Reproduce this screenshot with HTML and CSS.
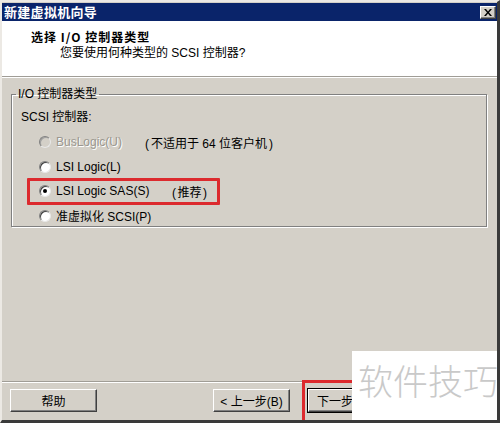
FILE: index.html
```html
<!DOCTYPE html>
<html lang="zh">
<head>
<meta charset="utf-8">
<link rel="stylesheet" href="styles.css">
</head>
<body>
<div class="window">
  <div class="titlebar">
    <span class="title">新建虚拟机向导</span>
    <span class="close"><svg width="8" height="7" viewBox="0 0 8 7"><path d="M0 0h2l2 2.5L6 0h2L5 3.5 8 7H6L4 4.5 2 7H0l3-3.5z" fill="#000"/></svg></span>
  </div>
  <div class="header">
    <div class="h-title">选择 I/O 控制器类型</div>
    <div class="h-sub">您要使用何种类型的 SCSI 控制器?</div>
  </div>
  <div class="sep"></div>
  <div class="body">
    <fieldset class="group">
      <legend>I/O 控制器类型</legend>
      <div class="label">SCSI 控制器:</div>
      <div class="row disabled"><span class="radio"></span><span class="rtext">BusLogic(U)</span><span class="note"><span class="p">(</span>不适用于 64 位客户机<span class="p">)</span></span></div>
      <div class="row"><span class="radio"></span><span class="rtext">LSI Logic(L)</span></div>
      <div class="row marked"><span class="radio checked"></span><span class="rtext">LSI Logic SAS(S)</span><span class="note rec"><span class="p">(</span>推荐<span class="p">)</span></span></div>
      <div class="row"><span class="radio"></span><span class="rtext">准虚拟化 SCSI(P)</span></div>
    </fieldset>
  </div>
  <div class="footer">
    <button class="btn help">帮助</button>
    <div class="nav">
      <button class="btn">&lt; 上一步(B)</button>
      <button class="btn next">下一步</button>
    </div>
  </div>
  <div class="watermark">软件技巧</div>
</div>
</body>
</html>
```
FILE: styles.css
```css
html, body {
  margin: 0;
  padding: 0;
  background: #fff;
}
.window {
  position: relative;
  width: 500px;
  height: 423px;
  box-sizing: border-box;
  border-style: solid;
  border-width: 2px 3px 3px 2px;
  border-color: #ece9e4 #3a3a3a #3a3a3a #ece9e4;
  padding-top: 1px;
  background: #d4d0c8;
  display: flex;
  flex-direction: column;
  font-family: "Liberation Sans", "Noto Sans CJK SC", sans-serif;
  font-size: 12px;
  color: #000;
  overflow: hidden;
}
.titlebar {
  height: 18px;
  background: #0a246a;
  display: flex;
  align-items: center;
  justify-content: space-between;
  padding: 0 1px 0 2px;
  flex: none;
}
.title {
  color: #fff;
  font-family: "Noto Sans CJK SC", sans-serif;
  font-weight: bold;
  font-size: 13px;
  line-height: 18px;
  letter-spacing: 0.3px;
}
.close {
  width: 14px;
  height: 11px;
  background: #d4d0c8;
  border-style: solid;
  border-width: 1px;
  border-color: #fff #404040 #404040 #fff;
  box-shadow: inset -1px -1px 0 #808080;
  display: flex;
  align-items: center;
  justify-content: center;
  margin-top: 1px;
}
.header {
  height: 55px;
  background: #fff;
  flex: none;
  box-sizing: border-box;
  padding: 7px 0 0 29px;
}
.h-title {
  font-family: "Noto Sans CJK SC", sans-serif;
  font-weight: bold;
  font-size: 12px;
  line-height: 18px;
  letter-spacing: 1px;
}
.h-sub {
  margin: -2px 0 0 29px;
  line-height: 18px;
  color: #000;
}
.sep {
  height: 0;
  border-top: 1px solid #a09d96;
  border-bottom: 1px solid #fff;
  flex: none;
}
.body {
  flex: 1;
  padding: 9px 10px 0 9px;
}
.group {
  margin: 0;
  padding: 2px 8px 8px 8px;
  border: 1px solid #808080;
  box-shadow: 1px 1px 0 #fff, inset 1px 1px 0 #fff;
  height: 140px;
  box-sizing: border-box;
}
.group legend {
  padding: 0 2px;
  margin-left: -4px;
  line-height: 14px;
}
.label {
  line-height: 18px;
  margin: 5px 0 4px 1px;
}
.row {
  position: relative;
  display: flex;
  align-items: center;
  height: 24.5px;
  padding-left: 19px;
}
.radio {
  width: 12px;
  height: 12px;
  box-sizing: border-box;
  border-radius: 50%;
  background: #fff;
  border: 1px solid;
  border-color: #808080 #e8e8e8 #e8e8e8 #808080;
  box-shadow: inset 1px 1px 0 #404040;
  display: flex;
  align-items: center;
  justify-content: center;
  margin-right: 5px;
  flex: none;
}
.radio.checked::after {
  content: "";
  width: 4px;
  height: 4px;
  border-radius: 50%;
  background: #000;
}
.disabled .radio {
  background: #d4d0c8;
  box-shadow: inset 1px 1px 0 #a0a0a0;
}
.disabled .rtext {
  color: #9a978f;
  text-shadow: 1px 1px 0 #fff;
}
.note {
  margin-left: 21px;
}
.note.rec {
  margin-left: 21px;
}
.note .p {
  margin: 0 2px;
}
.note.rec .p {
  margin: 0 1.5px;
}
.marked::after {
  content: "";
  position: absolute;
  left: 7px;
  top: -1px;
  width: 193px;
  height: 27px;
  box-sizing: border-box;
  border: 3px solid #dc2a2e;
  border-radius: 1px;
}
.footer {
  flex: none;
  height: 39px;
  box-sizing: border-box;
  border-top: 1px solid #a09d96;
  box-shadow: inset 0 1px 0 #fff;
  padding: 7px 0 0 8px;
  display: flex;
  align-items: flex-start;
}
.btn {
  height: 23px;
  width: 87px;
  margin: 0;
  padding: 0;
  background: #d4d0c8;
  border-style: solid;
  border-width: 1px;
  border-color: #fff #404040 #404040 #fff;
  box-shadow: inset -1px -1px 0 #808080;
  font-family: "Liberation Sans", "Noto Sans CJK SC", sans-serif;
  font-size: 12px;
  color: #000;
}
.nav {
  display: flex;
  gap: 18px;
  margin-left: 116px;
  position: relative;
}
.nav .btn {
  width: 77px;
}
.nav .btn.next {
  outline: 1px solid #000;
  position: relative;
  text-align: left;
  padding-left: 8px;
}
.nav .btn.next::after {
  content: "";
  position: absolute;
  left: -7px;
  top: -10px;
  width: 100px;
  height: 46px;
  border: 3px solid #dc2a2e;
}
.watermark {
  position: absolute;
  left: 350px;
  top: 349px;
  width: 150px;
  height: 80px;
  background: #fff;
  color: #c9c9c9;
  font-family: "Noto Sans CJK SC", sans-serif;
  font-weight: 300;
  font-size: 35px;
  line-height: 40px;
  padding: 9px 0 0 6px;
  box-sizing: border-box;
}
```
